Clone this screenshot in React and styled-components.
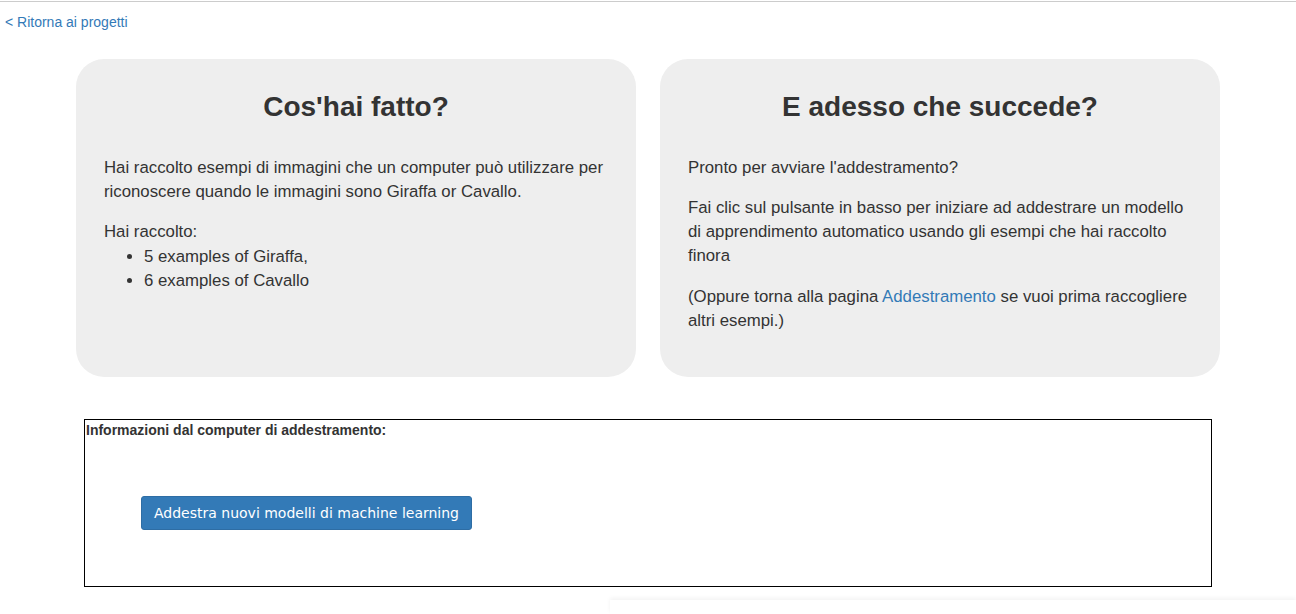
import React from 'react';
import styled, { createGlobalStyle } from 'styled-components';

const GlobalStyle = createGlobalStyle`
  html, body {
    margin: 0;
    padding: 0;
    background: #fff;
  }
  body {
    font-family: "Liberation Sans", Arial, Helvetica, sans-serif;
    font-size: 14px;
    line-height: 20px;
    color: #333;
  }
`;

const Page = styled.div`
  border-top: 1px solid #ccc;
  margin-top: 1px;
`;

const BackLink = styled.a`
  display: inline-block;
  margin: 10px 0 0 5px;
  font-size: 14px;
  line-height: 20px;
  color: #337ab7;
  text-decoration: none;
`;

const CardRow = styled.div`
  display: flex;
  justify-content: center;
  gap: 24px;
  margin-top: 27px;
`;

const Card = styled.section`
  width: 560px;
  box-sizing: border-box;
  padding: 32px 28px 44px;
  background: #eee;
  border-radius: 28px;
  font-size: 16.8px;
  line-height: 24px;
`;

const CardTitle = styled.h2`
  margin: 0 0 34px;
  font-size: 28px;
  line-height: 31px;
  font-weight: 700;
  text-align: center;
  color: #333;
`;

const Para = styled.p`
  margin: ${p => (p.$last ? '17px 0 0' : '0 0 16px')};
`;

const Label = styled.div``;

const Counts = styled.ul`
  margin: 1px 0 0;
  padding-left: 40px;
`;

const InlineLink = styled.a`
  color: #337ab7;
  text-decoration: none;
`;

const InfoBox = styled.div`
  width: 1128px;
  box-sizing: border-box;
  margin: 42px auto 0;
  border: 1px solid #000;
  padding: 0 1px;
`;

const InfoTitle = styled.div`
  font-weight: 700;
  font-size: 14px;
  line-height: 20px;
`;

const ButtonRow = styled.div`
  padding: 56px 55px;
`;

const PrimaryButton = styled.button`
  display: inline-block;
  font-family: "DejaVu Sans", Verdana, sans-serif;
  font-size: 14px;
  line-height: 20px;
  padding: 6px 12px;
  color: #fff;
  background: #337ab7;
  border: 1px solid #2e6da4;
  border-radius: 3px;
  cursor: pointer;
`;

const FooterEdge = styled.div`
  margin: 13px 0 0 610px;
  height: 14px;
  background: #fff;
  box-shadow: 0 -2px 4px rgba(0, 0, 0, 0.05);
`;

export default function App() {
  return (
    <>
      <GlobalStyle />
      <Page>
        <BackLink href="#">&lt; Ritorna ai progetti</BackLink>

        <CardRow>
          <Card>
            <CardTitle>Cos'hai fatto?</CardTitle>
            <Para>
              Hai raccolto esempi di immagini che un computer può utilizzare per
              riconoscere quando le immagini sono Giraffa or Cavallo.
            </Para>
            <Label>Hai raccolto:</Label>
            <Counts>
              <li>5 examples of Giraffa,</li>
              <li>6 examples of Cavallo</li>
            </Counts>
          </Card>

          <Card>
            <CardTitle>E adesso che succede?</CardTitle>
            <Para>Pronto per avviare l'addestramento?</Para>
            <Para>
              Fai clic sul pulsante in basso per iniziare ad addestrare un modello
              di apprendimento automatico usando gli esempi che hai raccolto
              finora
            </Para>
            <Para $last>
              (Oppure torna alla pagina <InlineLink href="#">Addestramento</InlineLink> se
              vuoi prima raccogliere altri esempi.)
            </Para>
          </Card>
        </CardRow>

        <InfoBox>
          <InfoTitle>Informazioni dal computer di addestramento:</InfoTitle>
          <ButtonRow>
            <PrimaryButton type="button">Addestra nuovi modelli di machine learning</PrimaryButton>
          </ButtonRow>
        </InfoBox>

        <FooterEdge />
      </Page>
    </>
  );
}
